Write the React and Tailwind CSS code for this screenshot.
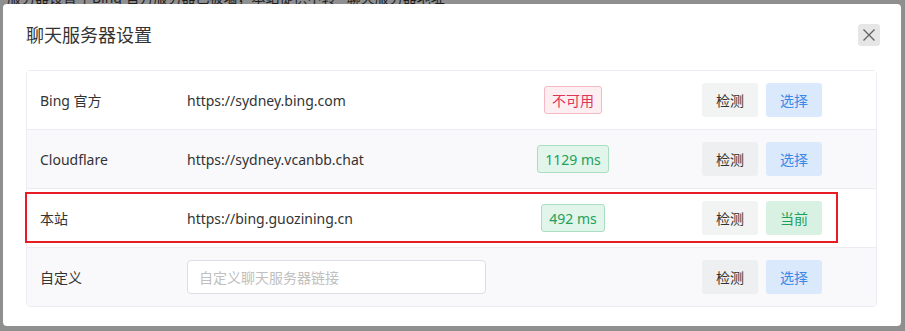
import React from "react";

const font = { fontFamily: '"Noto Sans", "Noto Sans CJK SC", sans-serif' };

function Badge({ kind, children }) {
  const cls =
    kind === "bad"
      ? "bg-[#fdeef1] border-[#f4b9c5] text-[#e0345a]"
      : "bg-[#e1f5ea] border-[#a9dec0] text-[#22a05a]";
  return (
    <span className={`inline-flex items-center justify-center h-[28px] px-[7px] border rounded-[3px] text-[14px] ${cls}`}>
      {children}
    </span>
  );
}

function Row({ label, url, badge, badgeKind, current, bg, last, input }) {
  return (
    <div className={`flex items-center ${bg} ${last ? "h-[58px]" : "h-[59px] border-b border-[#ececf2]"}`}>
      <div className="w-[160px] pl-[13px] text-[14px] text-[#333]">{label}</div>
      <div className="w-[300px] text-[14px] text-[#333]">
        {input ? (
          <div className="h-[34px] w-[299px] bg-white border border-[#dcdfe6] rounded-[4px] flex items-center pl-[11px] text-[14px] text-[#c0c0c0]">
            自定义聊天服务器链接
          </div>
        ) : (
          url
        )}
      </div>
      <div className="w-[172px] flex justify-center">
        {badge && <Badge kind={badgeKind}>{badge}</Badge>}
      </div>
      <div className="ml-[43px] flex gap-[8px]">
        <button className={`w-[56px] h-[34px] rounded-[3px] text-[14px] text-[#333] ${bg === "bg-white" ? "bg-[#f2f3f3]" : "bg-[#eeeff1]"}`}>
          检测
        </button>
        {current ? (
          <button className="w-[56px] h-[34px] rounded-[3px] text-[14px] text-[#22a05a] bg-[#d9f1e3]">当前</button>
        ) : (
          <button className="w-[56px] h-[34px] rounded-[3px] text-[14px] text-[#3a88e8] bg-[#dae9fb]">选择</button>
        )}
      </div>
    </div>
  );
}

export default function App() {
  return (
    <div className="w-[905px] h-[331px] bg-[#8f8f8f] pl-[3px] overflow-hidden" style={font}>
      <div className="h-[4px] overflow-hidden">
        <div className="-mt-[13px] text-[14px] text-[#1e1e1e] whitespace-nowrap pl-[4px]">
          服务器设置 | Bing 官方服务器已被墙，本站提供中转 · 聊天服务器地址
        </div>
      </div>
      <div className="w-[898px] h-[322px] bg-white rounded-[4px]">
        <div className="flex items-center justify-between pt-[19px] pl-[23px] pr-[21px]">
          <div className="text-[18px] leading-[24px] text-[#333]">聊天服务器设置</div>
          <button className="w-[22px] h-[22px] bg-[#e6e6e6] rounded-[3px] flex items-center justify-center">
            <svg width="14" height="14" viewBox="0 0 14 14">
              <path d="M1.5 1.5 L12.5 12.5 M12.5 1.5 L1.5 12.5" stroke="#666" strokeWidth="1.4" fill="none" />
            </svg>
          </button>
        </div>
        <div className="relative mt-[23px] ml-[23px] w-[851px] border border-[#ececf2] rounded-[4px]">
          <Row label="Bing 官方" url="https://sydney.bing.com" badge="不可用" badgeKind="bad" bg="bg-white" />
          <Row label="Cloudflare" url="https://sydney.vcanbb.chat" badge="1129 ms" badgeKind="ok" bg="bg-[#f9f9fb]" />
          <Row label="本站" url="https://bing.guozining.cn" badge="492 ms" badgeKind="ok" bg="bg-white" current />
          <Row label="自定义" input bg="bg-[#f9f9fb]" last />
          <div className="absolute left-[-2px] top-[121px] w-[813px] h-[51px] border-2 border-[#e81c24] pointer-events-none" />
        </div>
      </div>
    </div>
  );
}
